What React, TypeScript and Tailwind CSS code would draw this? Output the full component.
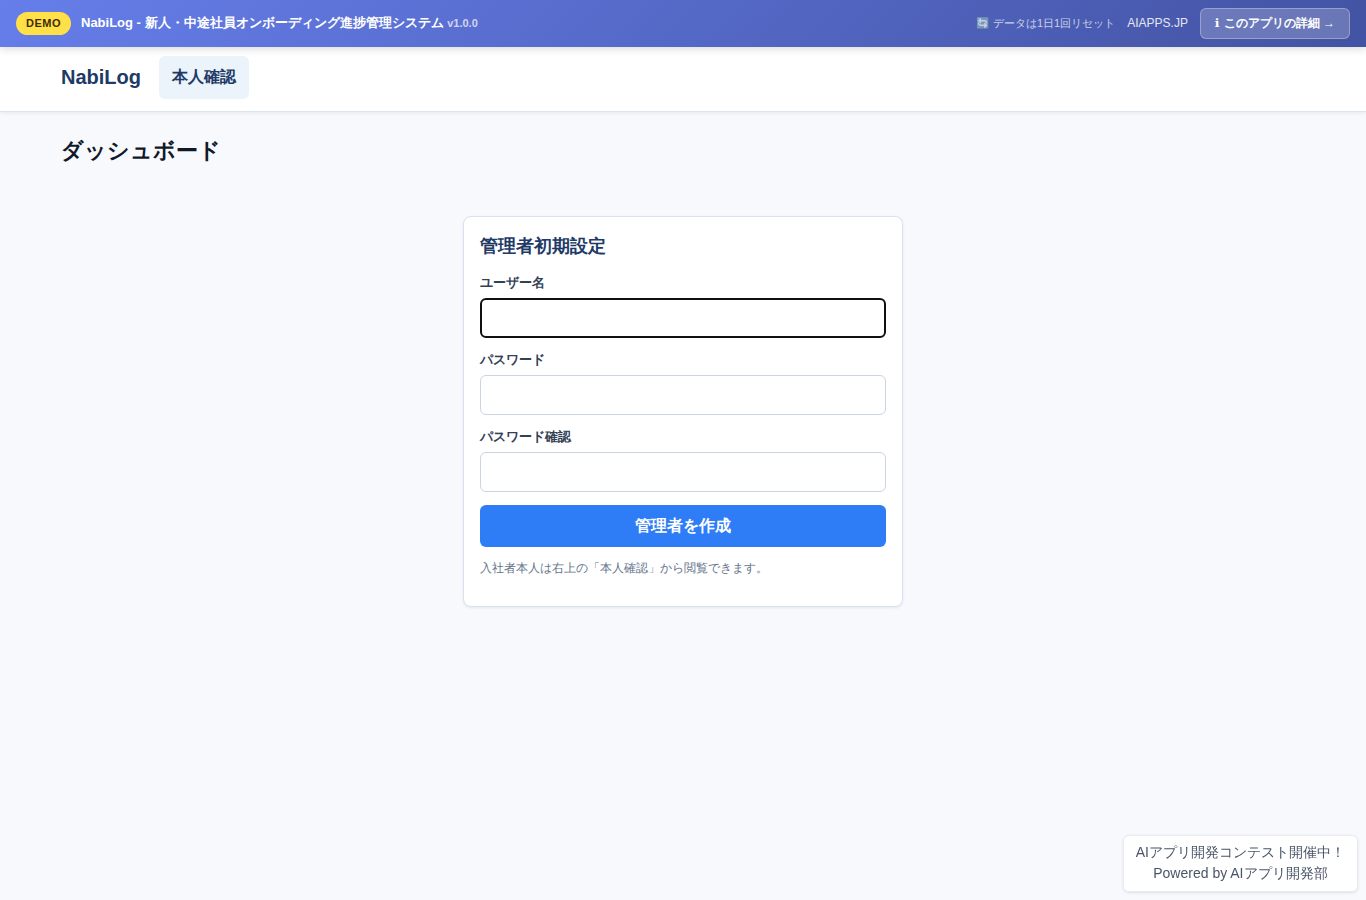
import { useState } from "react";

type FieldProps = {
  id: string;
  label: string;
  type: "text" | "password";
  autoFocus?: boolean;
};

function Field({ id, label, type, autoFocus }: FieldProps) {
  const [value, setValue] = useState("");
  return (
    <div className="flex flex-col gap-[5px]">
      <label htmlFor={id} className="text-[13px] leading-5 font-bold text-[#334155]">
        {label}
      </label>
      <input
        id={id}
        type={type}
        value={value}
        autoFocus={autoFocus}
        onChange={(e) => setValue(e.target.value)}
        className="h-10 w-full rounded-md border border-[#cbd5e1] bg-white px-3 text-base caret-transparent outline-none focus:border-2 focus:border-[#101010]"
      />
    </div>
  );
}

function DemoBanner() {
  return (
    <div className="relative z-20 flex items-center justify-between bg-linear-[135deg,#667eea,#4353a3] px-4 py-2 text-white shadow-[0_2px_8px_rgba(0,0,0,0.15)]">
      <div className="flex items-center gap-2.5">
        <span className="rounded-full bg-[#ffe046] px-2.5 py-1 text-[11px] leading-[15px] font-bold tracking-[0.5px] text-[#3d2c0a]">
          DEMO
        </span>
        <span className="pb-0.5 text-[13px] leading-[19px] font-bold">
          NabiLog - 新人・中途社員オンボーディング進捗管理システム{" "}
          <span className="text-[11px] opacity-70">v1.0.0</span>
        </span>
      </div>
      <div className="flex items-center gap-3">
        <span className="text-[11px] leading-[17px] opacity-70">🔄 データは1日1回リセット</span>
        <a href="#aiapps" className="text-xs leading-[17px] opacity-85">
          AIAPPS.JP
        </a>
        <a
          href="#details"
          className="rounded-md border border-white/30 bg-white/20 px-3.5 py-1.5 text-xs leading-[17px] font-bold"
        >
          <span className="font-['DejaVu_Sans',sans-serif]">ℹ </span>このアプリの詳細 →
        </a>
      </div>
    </div>
  );
}

export default function App() {
  return (
    <div className="min-h-screen bg-[#f7f9fd] font-['Liberation_Sans',sans-serif] text-[#111827]">
      <DemoBanner />
      <header className="relative z-10 border-b border-[#dbe4ef] bg-white shadow-[0_1px_4px_rgba(15,23,42,0.08)]">
        <div className="mx-auto flex max-w-[1280px] items-center gap-[18px] px-[18px] pt-[9px] pb-3">
          <a href="#home" className="text-xl leading-[25px] font-bold text-[#1e3a66]">
            NabiLog
          </a>
          <nav>
            <a
              href="#identity"
              className="block rounded-md bg-[#ebf3fb] px-[13px] pt-2 pb-2.5 text-base leading-[25px] font-bold text-[#1e3a66]"
            >
              本人確認
            </a>
          </nav>
        </div>
      </header>
      <main className="mx-auto max-w-[1280px] px-[18px] pt-[21px]">
        <h1 className="text-[22px] leading-9 font-bold">ダッシュボード</h1>
        <section className="mx-auto mt-[47px] max-w-[440px] rounded-lg border border-[#d9e3f0] bg-white px-4 pt-4 pb-7 shadow-[0_1px_3px_rgba(15,23,42,0.08)]">
          <h2 className="text-lg leading-[26px] font-bold text-[#1e3a66]">管理者初期設定</h2>
          <form onSubmit={(e) => e.preventDefault()} className="mt-3.5">
            <div className="flex flex-col gap-3">
              <Field id="username" label="ユーザー名" type="text" autoFocus />
              <Field id="password" label="パスワード" type="password" />
              <Field id="password-confirm" label="パスワード確認" type="password" />
            </div>
            <button
              type="submit"
              className="mt-[13px] w-full rounded-md bg-[#2f7df6] py-2 text-base leading-[26px] font-bold text-white"
            >
              管理者を作成
            </button>
          </form>
          <p className="mt-3 text-xs leading-[19px] text-[#64748b]">
            入社者本人は右上の「本人確認」から閲覧できます。
          </p>
        </section>
      </main>
      <aside className="fixed right-2 bottom-2 rounded-md border border-[#e8ecf2] bg-white px-3 pt-1.5 pb-[7px] text-center text-sm leading-[21px] text-[#4a5568] shadow-[0_1px_3px_rgba(0,0,0,0.1)]">
        <p>AIアプリ開発コンテスト開催中！</p>
        <p>Powered by AIアプリ開発部</p>
      </aside>
    </div>
  );
}
